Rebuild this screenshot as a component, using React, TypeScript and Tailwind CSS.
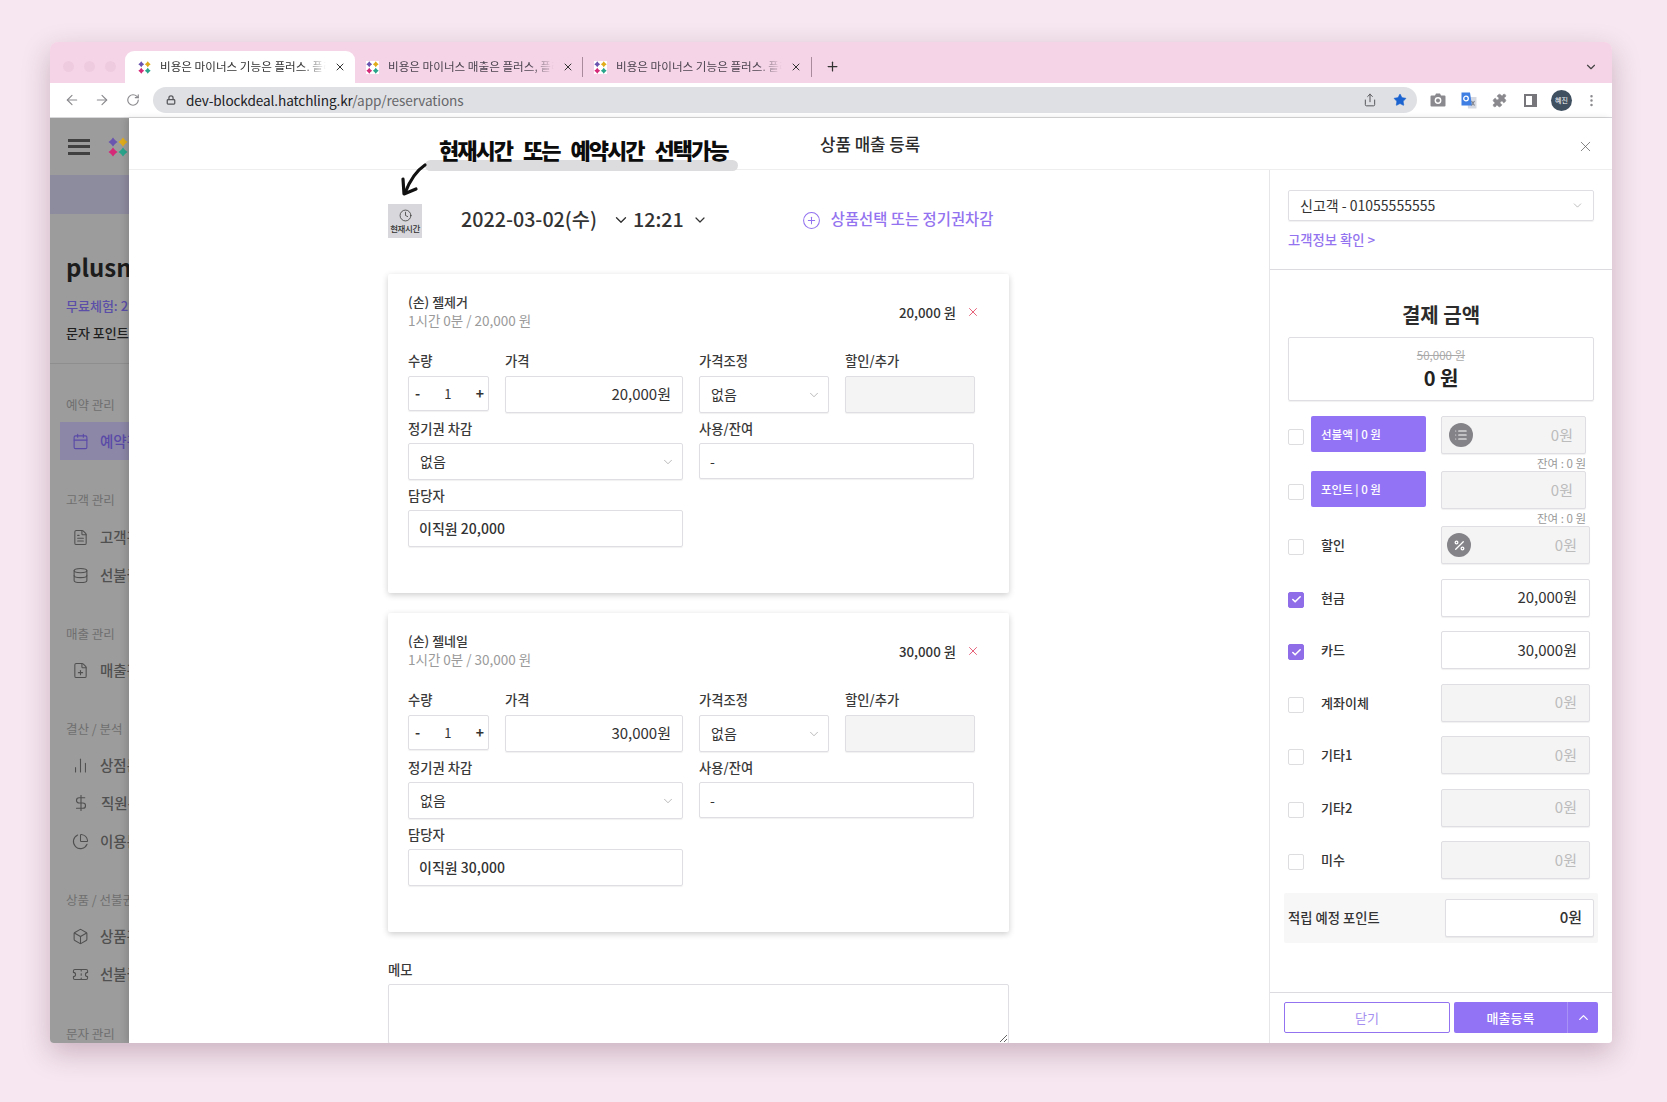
import {
  ArrowLeft,
  ArrowRight,
  Box,
  Calendar,
  ChartNoAxesColumn,
  ChartPie,
  Check,
  ChevronDown,
  ChevronUp,
  CirclePlus,
  Clock,
  Database,
  DollarSign,
  EllipsisVertical,
  FilePlus,
  FileText,
  List,
  Lock,
  Percent,
  Plus,
  Puzzle,
  RotateCw,
  Share,
  Star,
  Ticket,
  X,
} from "lucide-react";
import type { ReactNode } from "react";

function Logo({ size, white }: { size: number; white?: boolean }) {
  return (
    <svg width={size} height={size} viewBox="0 0 20 20" className={white ? "shrink-0 bg-white" : "shrink-0"}>
      <path d="M5 0.5l2 2.5 2.5 2-2.5 2-2 2.5-2-2.5L0.500 5 3 3z" fill="#6a55b0" />
      <path d="M15 0.500l2 2.500 2.500 2-2.500 2-2 2.500-2-2.500-2.500-2L13 3z" fill="#e0ac1c" />
      <path d="M5 10.500l2 2.500 2.500 2-2.500 2-2 2.500-2-2.500L0.500 15 3 13z" fill="#d42a78" />
      <path d="M15 10.500l2 2.500 2.500 2-2.500 2-2 2.500-2-2.500-2.500-2L13 13z" fill="#2aa58c" />
    </svg>
  );
}

function Tab({ title, active, width }: { title: string; active?: boolean; width: string }) {
  return (
    <div
      className={`flex h-[32px] items-center pl-[11px] ${width} ${
        active ? "rounded-t-[9px] bg-white pl-[13px] text-[#333]" : "text-[#4b4450]"
      }`}
    >
      <Logo size={13} white={!active} />
      <span className="ml-[9px] w-[166px] overflow-hidden whitespace-nowrap text-[11.6px] [mask-image:linear-gradient(to_right,black_85%,transparent)]">
        {title}
      </span>
      <X size={12} strokeWidth={2} className="ml-[8px] text-[#333]" />
    </div>
  );
}

function BrowserChrome() {
  return (
    <>
      <div className="flex h-[41px] items-end bg-[#f6d4e7] pl-[13px]">
        <div className="mb-[11px] flex w-[62px] gap-[10px]">
          <div className="h-[11px] w-[11px] rounded-full bg-[#efcbdf]" />
          <div className="h-[11px] w-[11px] rounded-full bg-[#efcbdf]" />
          <div className="h-[11px] w-[11px] rounded-full bg-[#efcbdf]" />
        </div>
        <Tab title="비용은 마이너스 기능은 플러스. 플러" active width="w-[230px]" />
        <Tab title="비용은 마이너스 매출은 플러스, 플러" width="w-[227px]" />
        <div className="mb-[6px] h-[20px] w-px bg-[#a88a9c]" />
        <Tab title="비용은 마이너스 기능은 플러스. 플러" width="w-[228px]" />
        <div className="mb-[6px] h-[20px] w-px bg-[#a88a9c]" />
        <Plus size={15} strokeWidth={2} className="mb-[9px] ml-[13px] text-[#333]" />
        <ChevronDown size={14} strokeWidth={2} className="mb-[9px] ml-auto mr-[14px] text-[#444]" />
      </div>
      <div className="flex h-[35px] items-center border-b border-[#d8d8da] bg-white pl-[14px] text-[#8a8a8e]">
        <ArrowLeft size={16} strokeWidth={1.7} />
        <ArrowRight size={16} strokeWidth={1.7} className="ml-[14px]" />
        <RotateCw size={14} strokeWidth={2} className="ml-[16px]" />
        <div className="ml-[13px] flex h-[26px] w-[1264px] items-center rounded-full bg-[#dfe0e3] pl-[13px]">
          <Lock size={10} strokeWidth={3} className="text-[#55565a]" />
          <span className="ml-[10px] text-[13.6px] tracking-[-0.1px] text-[#202124]">
            dev-blockdeal.hatchling.kr<span className="text-[#66676b]">/app/reservations</span>
          </span>
          <Share size={14} strokeWidth={1.7} className="ml-auto text-[#55565a]" />
          <Star size={14} fill="#1a63d0" strokeWidth={1} className="ml-[16px] mr-[10px] text-[#1a63d0]" />
        </div>
        <svg width="16" height="14" viewBox="0 0 16 14" className="ml-[13px]">
          <path d="M1.500 2.500h3.500l1-2h4l1 2h3.500a1 1 0 0 1 1 1v9a1 1 0 0 1-1 1h-13a1 1 0 0 1-1-1v-9a1 1 0 0 1 1-1z" fill="#8a8a8e" />
          <circle cx="8" cy="7.500" r="3.400" fill="#fff" />
          <circle cx="8" cy="7.500" r="2" fill="#8a8a8e" />
        </svg>
        <svg width="16" height="17" viewBox="0 0 16 17" className="ml-[15px]">
          <path d="M6 5h9.500v11.500H7z" fill="#d5d9e2" />
          <path d="M0.500 0.500h8.500l2 13H0.500z" fill="#3f7fe3" />
          <circle cx="5" cy="6.500" r="2.300" fill="none" stroke="#fff" strokeWidth="1.300" />
          <path d="M10.500 9l3 4.500M13.500 9l-3 4.500" stroke="#7a7f88" strokeWidth="1.100" />
        </svg>
        <Puzzle size={15} fill="#8a8a8e" strokeWidth={1} className="ml-[15px]" />
        <div className="ml-[17px] h-[13px] w-[13px] border-[2px] border-r-[5px] border-[#77777b]" />
        <div className="ml-[14px] flex h-[21px] w-[21px] items-center justify-center rounded-full bg-[#3f5060] text-[7px] text-white">
          혜진
        </div>
        <EllipsisVertical size={15} strokeWidth={2} className="ml-[12px]" />
      </div>
    </>
  );
}

function NavItem({ icon, label, active }: { icon: ReactNode; label: string; active?: boolean }) {
  return (
    <div
      className={`-ml-[6px] flex h-[38px] items-center whitespace-nowrap pl-[12px] text-[14.5px] font-medium ${
        active ? "bg-[#8c87a6] text-[#5a4aa8]" : "text-[#505050]"
      }`}
    >
      <span className="flex w-[21px] justify-center">{icon}</span>
      <span className="ml-[11px]">{label}</span>
    </div>
  );
}

function NavHeading({ label, gap }: { label: string; gap: string }) {
  return <div className={`h-[18px] whitespace-nowrap text-[12.5px] leading-[18px] text-[#6f6f6f] ${gap}`}>{label}</div>;
}

function Sidebar() {
  return (
    <aside className="w-[79px] shrink-0 overflow-hidden bg-[#9c9c9c]">
      <div className="flex h-[57px] items-center gap-[18px] pl-[18px]">
        <div className="flex h-[16px] w-[22px] shrink-0 flex-col justify-between">
          <div className="h-[3px] bg-[#404040]" />
          <div className="h-[3px] bg-[#404040]" />
          <div className="h-[3px] bg-[#404040]" />
        </div>
        <Logo size={20} />
      </div>
      <div className="h-[39px] bg-[#8d8b9e]" />
      <div className="mt-[37px] h-[32px] whitespace-nowrap pl-[16px] text-[24px] font-bold leading-[32px] text-[#1c1c1c]">plusnail</div>
      <div className="mt-[13px] h-[20px] whitespace-nowrap pl-[16px] text-[13px] font-medium leading-[20px] text-[#5a4ea8]">무료체험: 2일</div>
      <div className="mt-[7px] h-[20px] whitespace-nowrap pl-[16px] text-[13px] font-medium leading-[20px] text-[#1f1f1f]">문자 포인트</div>
      <div className="mt-[20px] h-px bg-[#8e8e8e]" />
      <div className="pl-[16px]">
        <NavHeading label="예약 관리" gap="mt-[32px] mb-[8px]" />
        <NavItem active icon={<Calendar size={17} strokeWidth={1.6} />} label="예약관리" />
        <NavHeading label="고객 관리" gap="mt-[31px] mb-[9px]" />
        <NavItem icon={<FileText size={17} strokeWidth={1.5} />} label="고객관리" />
        <NavItem icon={<Database size={17} strokeWidth={1.5} />} label="선불권" />
        <NavHeading label="매출 관리" gap="mt-[31px] mb-[8px]" />
        <NavItem icon={<FilePlus size={17} strokeWidth={1.5} />} label="매출관리" />
        <NavHeading label="결산 / 분석" gap="mt-[31px] mb-[8px]" />
        <NavItem icon={<ChartNoAxesColumn size={17} strokeWidth={1.5} />} label="상점분석" />
        <NavItem icon={<DollarSign size={18} strokeWidth={1.5} />} label="직원분석" />
        <NavItem icon={<ChartPie size={17} strokeWidth={1.5} />} label="이용분석" />
        <NavHeading label="상품 / 선불권" gap="mt-[31px] mb-[8px]" />
        <NavItem icon={<Box size={17} strokeWidth={1.5} />} label="상품관리" />
        <NavItem icon={<Ticket size={17} strokeWidth={1.5} />} label="선불권" />
        <NavHeading label="문자 관리" gap="mt-[32px]" />
      </div>
    </aside>
  );
}

const fieldBox = "flex items-center rounded-[2px] border border-[#dfdfe3] text-[14px] shadow-[0_1px_1px_rgba(0,0,0,0.06)]";

function Label({ children, className }: { children: ReactNode; className?: string }) {
  return <div className={`h-[17px] text-[13.3px] font-medium leading-[17px] text-[#3a3a3a] ${className ?? ""}`}>{children}</div>;
}

function SelectBox({ value, width }: { value: string; width: string }) {
  return (
    <div className={`${fieldBox} h-[37px] pl-[11px] pr-[7px] ${width}`}>
      <span className="text-[#333]">{value}</span>
      <ChevronDown size={14} strokeWidth={1} className="ml-auto text-[#888]" />
    </div>
  );
}

function ServiceCard({ name, price, staff }: { name: string; price: string; staff: string }) {
  return (
    <div className="h-[319px] rounded-[2px] bg-white px-[20px] pt-[18px] shadow-[0_2px_6px_rgba(0,0,0,0.2)]">
      <div className="flex h-[38px] items-center">
        <div>
          <div className="text-[13px] font-medium leading-[19px] text-[#3a3a3a]">{name}</div>
          <div className="text-[13.5px] leading-[19px] text-[#9a9a9a]">1시간 0분 / {price} 원</div>
        </div>
        <div className="ml-auto pt-[3px] text-[13.3px] font-medium text-[#333]">{price} 원</div>
        <X size={14} strokeWidth={1.4} className="ml-[10px] mr-[9px] mt-[2px] text-[#e0405c]" />
      </div>
      <div className="mt-[22px] flex gap-x-[16px]">
        <div className="w-[81px]">
          <Label>수량</Label>
          <div className={`${fieldBox} mt-[7px] h-[35px] justify-between pl-[6px] pr-[4px] text-[#333]`}>
            <span className="font-bold">-</span>
            <span className="text-[13px]">1</span>
            <span className="font-bold">+</span>
          </div>
        </div>
        <div className="w-[178px]">
          <Label>가격</Label>
          <div className={`${fieldBox} mt-[7px] h-[37px] justify-end pr-[11px] text-[15px] text-[#333]`}>{price}원</div>
        </div>
        <div className="w-[130px]">
          <Label>가격조정</Label>
          <SelectBox value="없음" width="mt-[7px]" />
        </div>
        <div className="w-[130px]">
          <Label>할인/추가</Label>
          <div className={`${fieldBox} mt-[7px] h-[37px] bg-[#f4f4f5]`} />
        </div>
      </div>
      <div className="mt-[7px] flex gap-x-[16px]">
        <div className="w-[275px]">
          <Label>정기권 차감</Label>
          <SelectBox value="없음" width="mt-[6px]" />
        </div>
        <div className="w-[275px]">
          <Label>사용/잔여</Label>
          <div className={`${fieldBox} mt-[6px] h-[36px] pl-[10px] text-[#333]`}>-</div>
        </div>
      </div>
      <div className="mt-[7px] w-[275px]">
        <Label>담당자</Label>
        <div className={`${fieldBox} mt-[6px] h-[37px] pl-[10px] text-[13.2px] font-medium text-[#333]`}>{staff}</div>
      </div>
    </div>
  );
}

function Annotation() {
  return (
    <>
      <div className="absolute left-[296px] top-[42px] h-[11px] w-[313px] rounded-full bg-[#dcdcde]" />
      <div className="absolute left-[310px] top-[13px] whitespace-nowrap text-[22px] font-black leading-[36px] tracking-[-2px] text-[#0c0c0c] [word-spacing:8px]">
        현재시간 또는 예약시간 선택가능
      </div>
      <svg className="absolute left-[270px] top-[44px]" width="30" height="36" viewBox="0 0 30 36" fill="none">
        <path d="M26 3C17 9 11 18 6 31" stroke="#111" strokeWidth="3.200" strokeLinecap="round" />
        <path d="M4 17L5 32L17 27" stroke="#111" strokeWidth="3.200" strokeLinecap="round" strokeLinejoin="round" />
      </svg>
    </>
  );
}

function DateRow() {
  return (
    <div className="mt-[34px] flex h-[34px] items-center text-[#333]">
      <div className="flex h-[34px] w-[34px] flex-col items-center justify-center bg-[#d8d8dc]">
        <Clock size={13} strokeWidth={1.4} className="text-[#333]" />
        <span className="mt-[1px] whitespace-nowrap text-[8.5px] font-medium leading-[11px] tracking-[-0.4px]">현재시간</span>
      </div>
      <span className="ml-[39px] whitespace-nowrap pb-[5px] text-[19.7px] font-medium">2022-03-02(수)</span>
      <ChevronDown size={18} strokeWidth={1.8} className="mb-[2px] ml-[15px]" />
      <span className="ml-[3px] pb-[5px] text-[19.7px] font-medium">12:21</span>
      <ChevronDown size={16} strokeWidth={1.8} className="mb-[2px] ml-[8px]" />
      <CirclePlus size={19} strokeWidth={1.3} className="mb-[2px] ml-[94px] text-[#9373ef]" />
      <span className="ml-[10px] whitespace-nowrap pb-[5px] text-[15.4px] font-medium text-[#9373ef]">상품선택 또는 정기권차감</span>
    </div>
  );
}

function Checkbox({ checked }: { checked?: boolean }) {
  return (
    <div
      className={`mt-[13px] flex h-[16px] w-[16px] shrink-0 items-center justify-center rounded-[2px] border ${
        checked ? "border-[#8f6de8] bg-[#8f6de8]" : "border-[#dddde0] bg-white"
      }`}
    >
      {checked && <Check size={11} strokeWidth={3.5} className="text-white" />}
    </div>
  );
}

function PayRow({
  label,
  chip,
  value,
  checked,
  remain,
  icon,
  narrow,
}: {
  label: string;
  chip?: boolean;
  value: string;
  checked?: boolean;
  remain?: boolean;
  icon?: ReactNode;
  narrow?: boolean;
}) {
  return (
    <div className={`flex items-start ${remain ? "h-[55px]" : "h-[52.5px]"}`}>
      <Checkbox checked={checked} />
      {chip ? (
        <div className="ml-[7px] flex h-[36px] w-[115px] items-center rounded-[2px] bg-[#9373f5] pl-[10px] pt-[1px] text-[11.5px] font-medium text-white">
          {label}
        </div>
      ) : (
        <div className="ml-[17px] flex h-[38px] w-[105px] items-center text-[13px] font-medium text-[#333]">{label}</div>
      )}
      <div className="ml-[15px]">
        <div
          className={`${fieldBox} h-[38px] pr-[12px] text-[15px] ${narrow ? "w-[145px]" : "w-[149px]"} ${
            checked ? "bg-white text-[#333]" : "bg-[#f4f4f5] text-[#bcbcbc]"
          }`}
        >
          {icon}
          <span className="ml-auto">{value}</span>
        </div>
        {remain && <div className="w-[145px] pt-[1px] text-right text-[11.5px] leading-[16px] text-[#999]">잔여 : 0 원</div>}
      </div>
    </div>
  );
}

function RoundIcon({ children, left }: { children: ReactNode; left: string }) {
  return <div className={`flex h-[24px] w-[24px] items-center justify-center rounded-full bg-[#838388] text-white ${left}`}>{children}</div>;
}

function PaymentPanel() {
  return (
    <aside className="flex w-[343px] shrink-0 flex-col border-l border-[#e6e6e9]">
      <div className="h-[100px] shrink-0 border-b border-[#dcdce0] pl-[18px] pr-[18px] pt-[20px]">
        <div className={`${fieldBox} h-[31px] pl-[11px] pr-[9px] text-[12.7px] text-[#333]`}>
          신고객 - 01055555555
          <ChevronDown size={13} strokeWidth={1} className="ml-auto text-[#888]" />
        </div>
        <div className="mt-[10px] text-[13.3px] font-medium leading-[18px] text-[#9373ef]">고객정보 확인 &gt;</div>
      </div>
      <div className="pl-[18px] pr-[18px] pt-[31px]">
        <div className="text-center text-[20px] font-bold leading-[28px] text-[#2c2c2c]">결제 금액</div>
        <div className={`mt-[8px] h-[64px] flex-col justify-center ${fieldBox}`}>
          <span className="text-[11.5px] leading-[16px] text-[#aaa] line-through">50,000 원</span>
          <span className="text-[20px] font-bold leading-[29px] text-[#222]">0 원</span>
        </div>
        <div className="mt-[15px]">
          <PayRow
            label="선불액 | 0 원"
            chip
            value="0원"
            remain
            narrow
            icon={
              <RoundIcon left="ml-[7px]">
                <List size={14} strokeWidth={1.8} />
              </RoundIcon>
            }
          />
          <PayRow label="포인트 | 0 원" chip value="0원" remain narrow />
          <PayRow
            label="할인"
            value="0원"
            icon={
              <RoundIcon left="ml-[5px]">
                <Percent size={13} strokeWidth={2.4} />
              </RoundIcon>
            }
          />
          <PayRow label="현금" value="20,000원" checked />
          <PayRow label="카드" value="30,000원" checked />
          <PayRow label="계좌이체" value="0원" />
          <PayRow label="기타1" value="0원" />
          <PayRow label="기타2" value="0원" />
          <PayRow label="미수" value="0원" />
        </div>
        <div className="-mx-[4px] -mt-[1px] flex h-[50px] items-center rounded-[2px] bg-[#f7f7f8] pl-[4px] pr-[4px]">
          <span className="text-[13.3px] font-medium text-[#333]">적립 예정 포인트</span>
          <div className={`${fieldBox} ml-auto h-[38px] w-[149px] justify-end bg-white pr-[11px] text-[15px] font-medium text-[#333]`}>0원</div>
        </div>
      </div>
      <div className="mt-auto flex h-[51px] shrink-0 gap-[4px] border-t border-[#dcdce0] pl-[14px] pt-[9px]">
        <div className="flex h-[31px] w-[166px] items-center justify-center rounded-[2px] border border-[#9373ef] bg-white text-[13px] text-[#a58ff0]">닫기</div>
        <div className="flex h-[31px] w-[144px] rounded-[2px] bg-[#9373f5] text-white">
          <div className="flex w-[114px] items-center justify-center border-r border-[#a892f5] text-[13px] font-medium">매출등록</div>
          <div className="flex flex-1 items-center justify-center">
            <ChevronUp size={15} strokeWidth={2} />
          </div>
        </div>
      </div>
    </aside>
  );
}

export default function App() {
  return (
    <div className="h-[1102px] w-[1667px] overflow-hidden bg-[#f6e7f0] pl-[50px] pt-[42px] font-['Noto_Sans_CJK_KR',sans-serif]">
      <div className="h-[1001px] w-[1562px] overflow-hidden rounded-t-[8px] rounded-b-[4px] shadow-[0_10px_28px_rgba(90,40,70,0.28)]">
        <BrowserChrome />
        <div className="flex h-[925px]">
          <Sidebar />
          <div className="relative flex min-w-0 flex-1 flex-col bg-white shadow-[-3px_0_6px_rgba(0,0,0,0.12)]">
            <div className="relative flex h-[52px] shrink-0 items-center border-b border-[#eeeeef]">
              <span className="ml-[691px] pt-[3px] text-[16.8px] font-medium text-[#2c2c2c]">상품 매출 등록</span>
              <X size={17} strokeWidth={1} className="absolute right-[18px] top-[20px] text-[#555]" />
            </div>
            <Annotation />
            <div className="flex min-h-0 flex-1">
              <main className="min-w-0 flex-1 overflow-hidden pl-[259px]">
                <div className="w-[621px]">
                  <DateRow />
                  <div className="mt-[36px]">
                    <ServiceCard name="(손) 젤제거" price="20,000" staff="이직원 20,000" />
                  </div>
                  <div className="mt-[20px]">
                    <ServiceCard name="(손) 젤네일" price="30,000" staff="이직원 30,000" />
                  </div>
                  <Label className="mt-[29px]">메모</Label>
                  <textarea
                    readOnly
                    className="mt-[6px] block h-[60px] w-full rounded-[2px] border border-[#dfdfe3] shadow-[0_1px_1px_rgba(0,0,0,0.06)]"
                  />
                </div>
              </main>
              <PaymentPanel />
            </div>
          </div>
        </div>
      </div>
    </div>
  );
}
